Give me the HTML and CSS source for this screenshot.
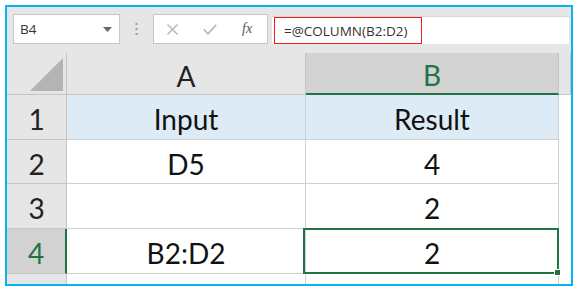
FILE: index.html
```html
<!DOCTYPE html>
<html lang="en">
  <head>
    <meta charset="UTF-8" />
    <title>COLUMN function</title>
    <link rel="stylesheet" href="styles.css">
  </head>
  <body>
    <div class="frame">
      <div class="toolbar">
        <div class="namebox">
          <span>B4</span>
          <svg class="arrow" width="9" height="5" viewBox="0 0 9 5"><path d="M0 0 L9 0 L4.5 5 Z" fill="#6a6a6a"/></svg>
        </div>
        <svg class="grip" width="3" height="12" viewBox="0 0 3 12">
          <rect x="0.5" y="0" width="2" height="2" fill="#9a9a9a"/>
          <rect x="0.5" y="5" width="2" height="2" fill="#9a9a9a"/>
          <rect x="0.5" y="10" width="2" height="2" fill="#9a9a9a"/>
        </svg>
        <div class="fxbox">
          <svg width="11" height="11" viewBox="0 0 11 11"><path d="M0.5 0.5 L10.5 10.5 M10.5 0.5 L0.5 10.5" stroke="#b4b4b4" stroke-width="1.4"/></svg>
          <svg width="14" height="11" viewBox="0 0 14 11"><path d="M0.8 5.5 L5 9.8 L13.2 0.8" stroke="#b4b4b4" stroke-width="1.6" fill="none"/></svg>
          <span class="fx">fx</span>
        </div>
        <div class="formula">
          <span class="formula-text">=@COLUMN(B2:D2)</span>
        </div>
      </div>

      <div class="sheet">
        <!-- column headers -->
        <div class="hd corner"><div class="tri"></div></div>
        <div class="hd">A</div>
        <div class="hd hd-sel">B</div>
        <div class="hd"></div>

        <!-- row 1 -->
        <div class="rh">1</div>
        <div class="cell title">Input</div>
        <div class="cell title">Result</div>
        <div class="cell blank"></div>

        <!-- row 2 -->
        <div class="rh">2</div>
        <div class="cell">D5</div>
        <div class="cell">4</div>
        <div class="cell blank"></div>

        <!-- row 3 -->
        <div class="rh">3</div>
        <div class="cell"></div>
        <div class="cell">2</div>
        <div class="cell blank"></div>

        <!-- row 4 -->
        <div class="rh rh-sel">4</div>
        <div class="cell">B2:D2</div>
        <div class="cell active">2</div>
        <div class="cell blank"></div>

        <!-- rest -->
        <div class="rh rest"></div>
        <div class="cell rest"></div>
        <div class="cell rest"></div>
        <div class="cell blank rest"></div>
      </div>
    </div>
  </body>
</html>
```

FILE: styles.css
```css
body {
  margin: 0;
  padding: 0;
  background: #ffffff;
  font-family: "Lato", "Liberation Sans", sans-serif;
}

.frame {
  margin: 5px;
  height: 281px;
  box-sizing: border-box;
  border: 2px solid #0cb1ef;
  background: #e6e6e6;
  display: flex;
  flex-direction: column;
}

/* ---------- formula toolbar ---------- */

.toolbar {
  display: flex;
  align-items: flex-end;
  padding-top: 7px;
  font-family: "Open Sans", "Noto Sans", sans-serif;
}

.namebox {
  margin-left: 6px;
  width: 107px;
  height: 30px;
  box-sizing: border-box;
  background: #ffffff;
  border: 1px solid #c6c6c6;
  display: flex;
  align-items: center;
  justify-content: space-between;
  padding: 0 7px 0 6px;
  font-size: 13.5px;
  color: #333333;
}

.arrow {
  margin-top: 1px;
}

.grip {
  margin: 0 15px 9px 15px;
}

.fxbox {
  width: 115px;
  height: 30px;
  box-sizing: border-box;
  background: #ffffff;
  border: 1px solid #c6c6c6;
  display: flex;
  align-items: center;
  padding-left: 13px;
}

.fxbox svg:nth-child(2) {
  margin-left: 25px;
}

.fx {
  margin-left: 25px;
  font-family: "Liberation Serif", serif;
  font-style: italic;
  font-size: 14px;
  color: #555555;
}

.formula {
  margin-left: 4px;
  width: 297px;
  height: 28px;
  box-sizing: border-box;
  background: #ffffff;
  border-top: 1px solid #d6d6d6;
  display: flex;
}

.formula-text {
  margin-left: 2px;
  width: 148px;
  box-sizing: border-box;
  border: 1px solid #ee1c1c;
  padding: 0 0 0 9px;
  display: flex;
  align-items: center;
  font-size: 13.5px;
  color: #333333;
}

/* ---------- grid ---------- */

.sheet {
  margin-top: 9px;
  flex: 1;
  display: grid;
  grid-template-columns: 60px 239px 253px 1fr;
  grid-template-rows: 42px 45px 44px 45px 45px 1fr;
  font-size: 28px;
  color: #111111;
}

.sheet > div {
  box-sizing: border-box;
  display: flex;
  align-items: center;
  justify-content: center;
  padding-top: 4px;
}

.hd {
  background: #e6e6e6;
  border-right: 1px solid #c4c4c4;
  border-bottom: 1px solid #c4c4c4;
  color: #222222;
}

.hd:last-child {
  border-right: none;
}

.hd-sel {
  background: #d2d2d2;
  color: #217346;
  border-bottom: 2px solid #217346;
}

.corner {
  justify-content: flex-end !important;
  align-items: flex-end !important;
  padding: 0 3px 3px 0 !important;
}

.tri {
  width: 33px;
  height: 33px;
  background: #b4b4b4;
  clip-path: polygon(100% 0, 100% 100%, 0 100%);
}

.rh {
  background: #e6e6e6;
  border-right: 1px solid #c4c4c4;
  border-bottom: 1px solid #c4c4c4;
  color: #222222;
}

.rh-sel {
  background: #d2d2d2;
  color: #217346;
  border-right: 2px solid #217346;
}

.cell {
  background: #ffffff;
  border-right: 1px solid #d0d0d0;
  border-bottom: 1px solid #d0d0d0;
}

.title {
  background: #ddebf7;
}

.blank {
  border-right: none;
  border-bottom: none;
}

.rest {
  border-bottom: none;
}

.rh.rest {
  border-right: 1px solid #c4c4c4;
}

.active {
  position: relative;
}

.active::after {
  content: "";
  position: absolute;
  top: -1px;
  left: -3px;
  right: -1px;
  bottom: -1px;
  border: 2px solid #217346;
}

.active::before {
  content: "";
  position: absolute;
  right: -3px;
  bottom: -3px;
  width: 5px;
  height: 5px;
  background: #217346;
  border: 1px solid #ffffff;
  z-index: 1;
}
```
